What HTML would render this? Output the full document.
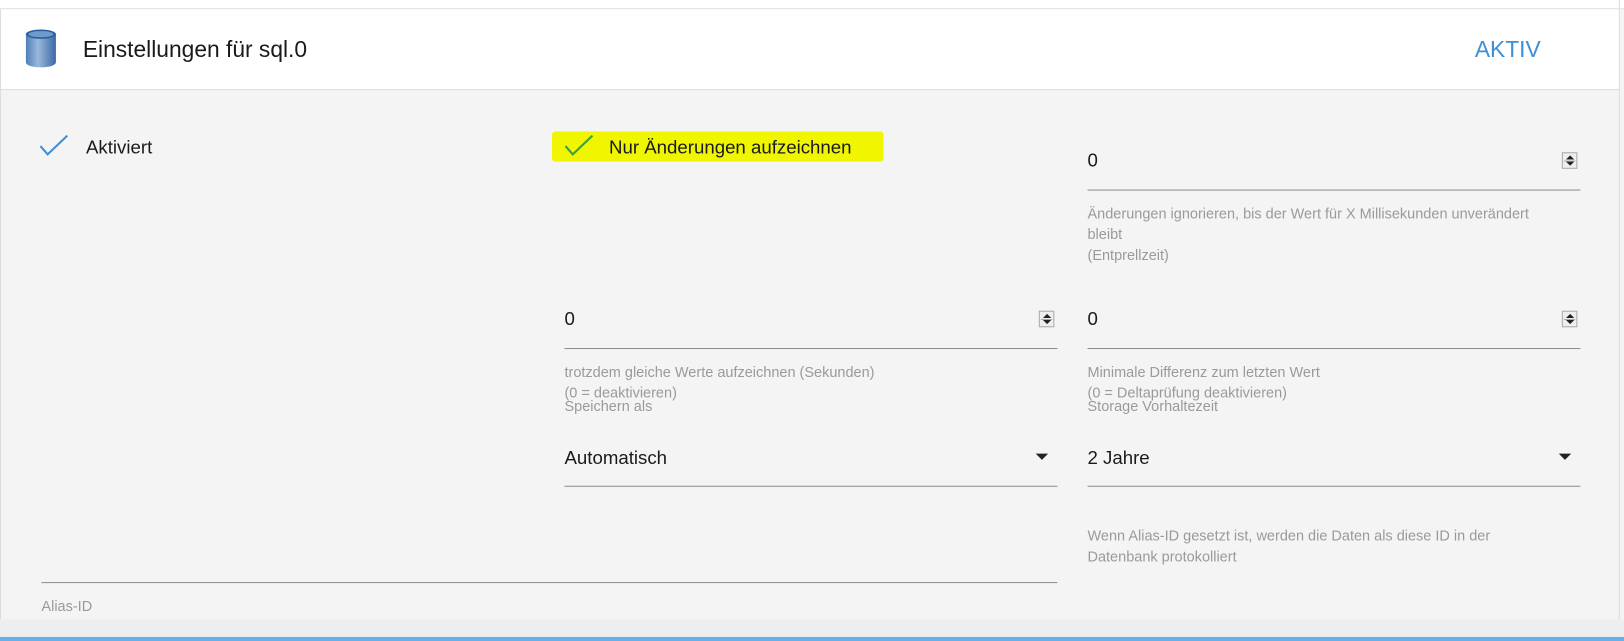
<!DOCTYPE html>
<html><head><meta charset="utf-8"><style>
html,body{margin:0;padding:0;width:1624px;height:641px;overflow:hidden;background:#f4f4f4}
#w{position:absolute;left:0;top:0;width:1568px;height:619px;transform:scale(1.03571);transform-origin:0 0;font-family:"Liberation Sans",sans-serif;background:#f4f4f4}
.a{position:absolute;white-space:nowrap}
.t{color:#1a1a1a;font-size:18px;margin-top:1px}
.h{color:#9a9a9a;font-size:14px;line-height:20px;margin-top:1px}
.ln{position:absolute;height:1px;background:#8f8f8f}
.sp{position:absolute;width:15px;height:16px;border:1px solid #aaa;background:#eee;box-sizing:border-box}
.sp:before{content:"";position:absolute;left:3px;top:2px;border:4px solid transparent;border-bottom:4px solid #222;border-top:0}
.sp:after{content:"";position:absolute;left:3px;bottom:2px;border:4px solid transparent;border-top:4px solid #222;border-bottom:0}
.sp i{position:absolute;left:1px;right:1px;top:7px;height:1px;background:#aaa}
.dd{position:absolute;border:6px solid transparent;border-top:6px solid #222;border-bottom:0}
</style></head><body><div id="w">
<div class="a" style="left:0;top:0;width:1568px;height:8px;background:#fff;border-bottom:1px solid #ddd"></div>
<div class="a" style="left:0;top:9px;width:1563px;height:77px;background:#fff;border-bottom:1px solid #ddd;border-left:1px solid #ddd"></div>
<div class="a" style="left:0;top:87px;width:1px;height:511px;background:#ddd"></div>
<div class="a" style="left:1563px;top:0;width:1px;height:598px;background:#ddd"></div>
<svg class="a" style="left:23px;top:27px" width="33" height="39" viewBox="0 0 33 39"><defs><linearGradient id="g" x1="0" x2="1"><stop offset="0" stop-color="#4f7fb8"/><stop offset=".4" stop-color="#9ab8dc"/><stop offset="1" stop-color="#3b6aa5"/></linearGradient></defs><path d="M2 6v27c0 3 6 5 14.5 5S31 36 31 33V6z" fill="url(#g)"/><ellipse cx="16.5" cy="6" rx="14.5" ry="4.5" fill="#2f5f99"/><ellipse cx="16.5" cy="6" rx="12" ry="3" fill="#6f9ad0"/></svg>
<div class="a t" style="left:80px;top:34px;font-size:22px">Einstellungen für sql.0</div>
<div class="a" style="left:1424px;top:35px;font-size:22px;color:#3d8fd6">AKTIV</div>
<svg class="a" style="left:37px;top:129px" width="30" height="22"><path d="M2 12l7 8L28 2" fill="none" stroke="#3d8fd6" stroke-width="2"/></svg>
<div class="a t" style="left:83px;top:131px">Aktiviert</div>
<div class="a" style="left:533px;top:127px;width:320px;height:29px;background:#f0f500;border-radius:3px"></div>
<svg class="a" style="left:544px;top:129px" width="30" height="22"><path d="M2 12l7 8L28 2" fill="none" stroke="#3aa03a" stroke-width="2"/></svg>
<div class="a t" style="left:588px;top:131px">Nur Änderungen aufzeichnen</div>
<div class="a t" style="left:1050px;top:144px">0</div><div class="sp" style="left:1508px;top:147px"><i></i></div>
<div class="ln" style="left:1050px;top:183px;width:476px"></div>
<div class="a h" style="left:1050px;top:195px">Änderungen ignorieren, bis der Wert für X Millisekunden unverändert<br>bleibt<br>(Entprellzeit)</div>
<div class="a t" style="left:545px;top:297px">0</div><div class="sp" style="left:1003px;top:300px"><i></i></div>
<div class="ln" style="left:545px;top:336px;width:476px"></div>
<div class="a h" style="left:545px;top:348px">trotzdem gleiche Werte aufzeichnen (Sekunden)<br>(0 = deaktivieren)</div>
<div class="a t" style="left:1050px;top:297px">0</div><div class="sp" style="left:1508px;top:300px"><i></i></div>
<div class="ln" style="left:1050px;top:336px;width:476px"></div>
<div class="a h" style="left:1050px;top:348px">Minimale Differenz zum letzten Wert<br>(0 = Deltaprüfung deaktivieren)</div>
<div class="a h" style="left:545px;top:381px">Speichern als</div>
<div class="a h" style="left:1050px;top:381px">Storage Vorhaltezeit</div>
<div class="a t" style="left:545px;top:431px">Automatisch</div><div class="dd" style="left:1000px;top:438px"></div>
<div class="ln" style="left:545px;top:469px;width:476px"></div>
<div class="a t" style="left:1050px;top:431px">2 Jahre</div><div class="dd" style="left:1505px;top:438px"></div>
<div class="ln" style="left:1050px;top:469px;width:476px"></div>
<div class="a h" style="left:1050px;top:506px">Wenn Alias-ID gesetzt ist, werden die Daten als diese ID in der<br>Datenbank protokolliert</div>
<div class="ln" style="left:40px;top:562px;width:981px"></div>
<div class="a h" style="left:40px;top:574px">Alias-ID</div>
<div class="a" style="left:0;top:598px;width:1568px;height:17px;background:#eceeef"></div>
<div class="a" style="left:0;top:615px;width:1568px;height:4px;background:#6aaee6"></div>
</div></body></html>
